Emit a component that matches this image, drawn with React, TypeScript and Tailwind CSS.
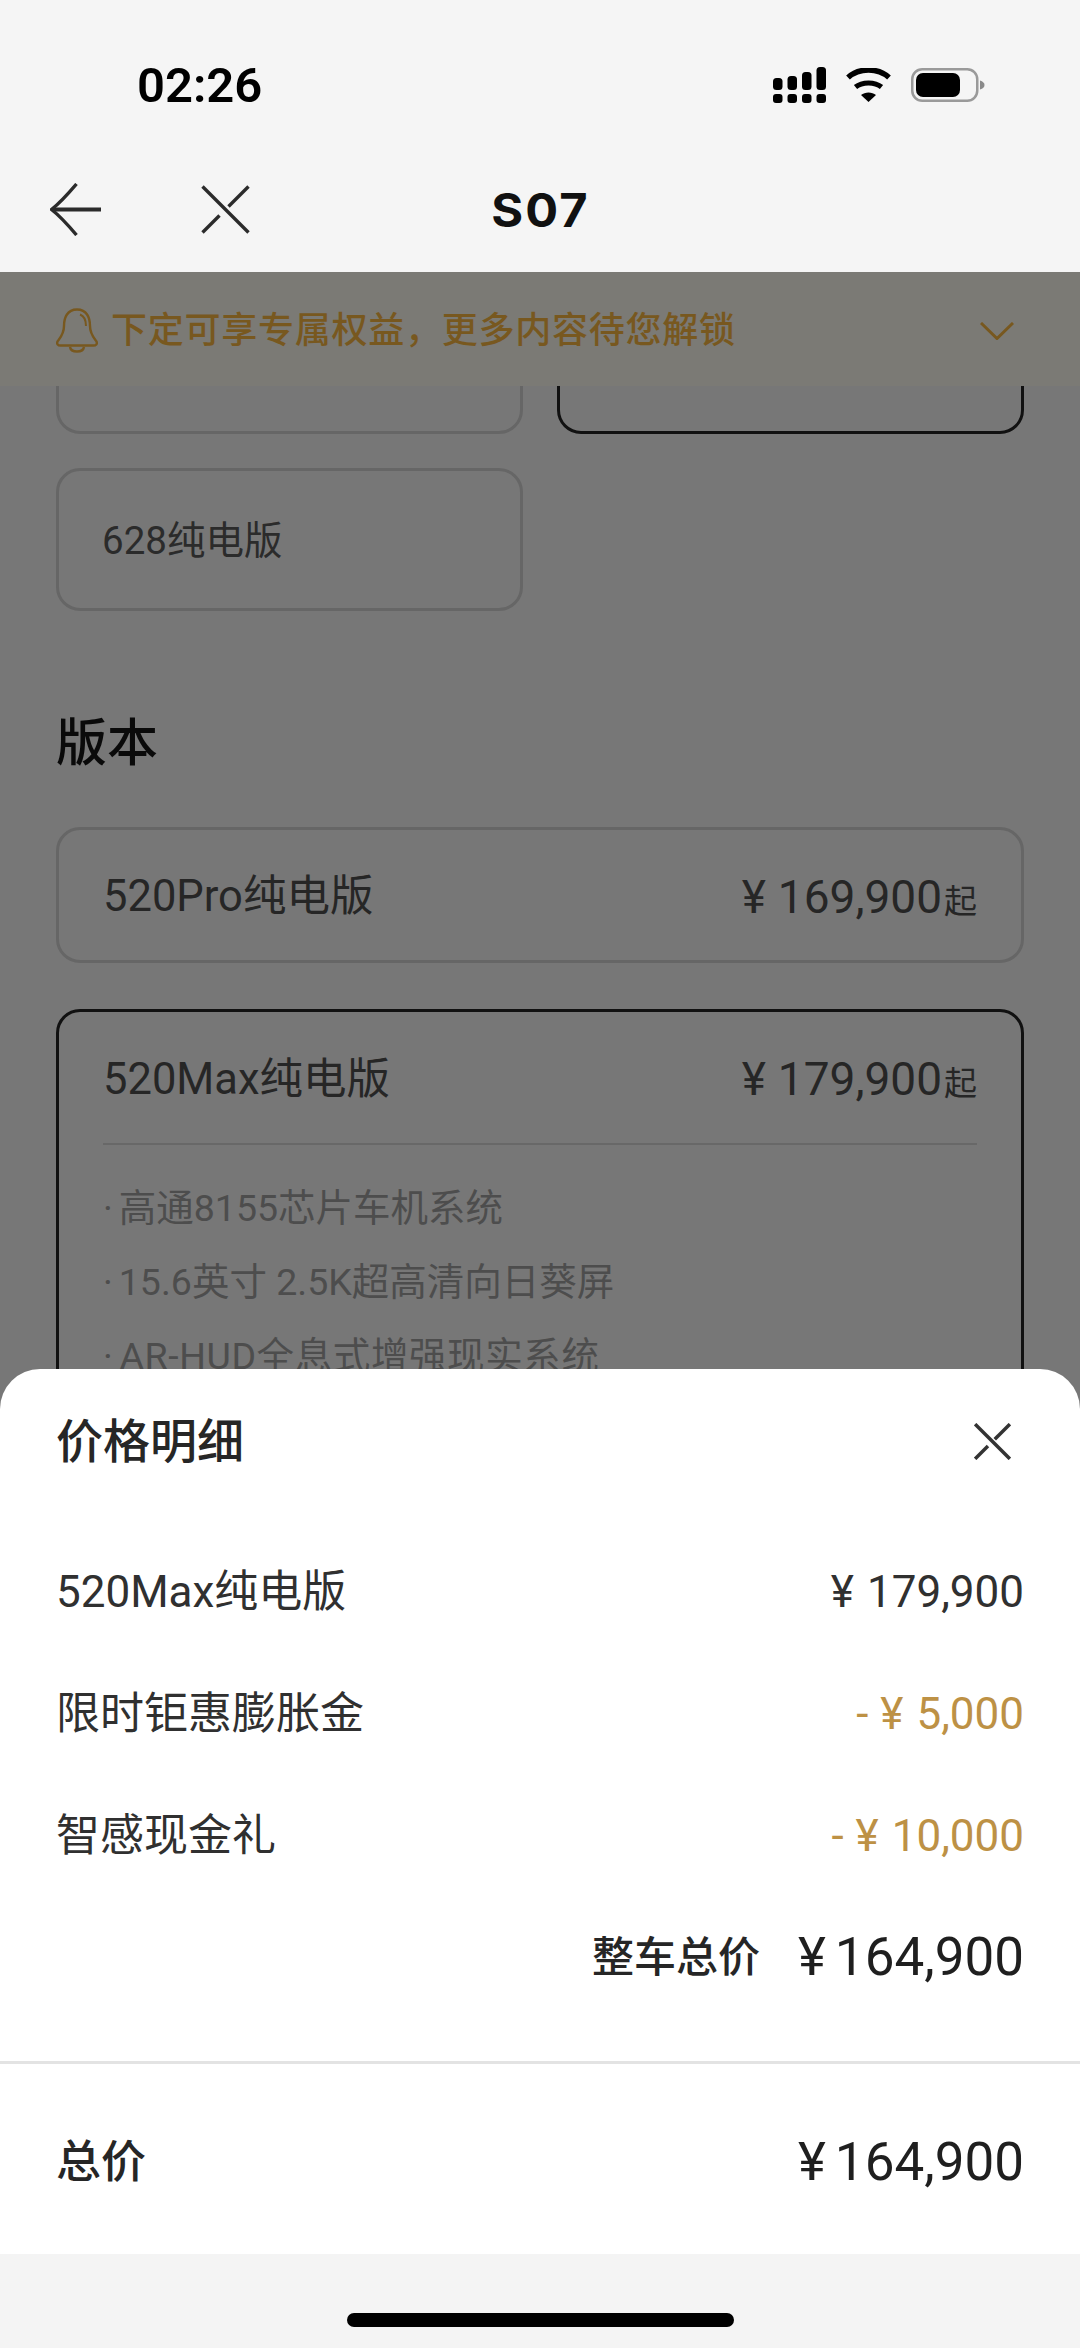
import React from "react";

const FONT = "font-['Roboto','Noto_Sans_CJK_SC',sans-serif]";

const features = [
  { text: "高通8155芯片车机系统", wide: false },
  { text: "15.6英寸 2.5K超高清向日葵屏", wide: false },
  { text: "AR-HUD全息式增强现实系统", wide: true },
];

function SignalIcon() {
  const cols = [
    { x: 0, top: 11 },
    { x: 14.5, top: 9 },
    { x: 29, top: 5 },
    { x: 43.5, top: 0 },
  ];
  return (
    <svg width="53" height="36" viewBox="0 0 53 36" fill="#000">
      {cols.map((c) => (
        <g key={c.x}>
          <rect x={c.x} y={c.top} width="9.5" height={23 - c.top} rx="3.5" />
          <rect x={c.x} y="27" width="9.5" height="9" rx="3" />
        </g>
      ))}
    </svg>
  );
}

function WifiIcon() {
  return (
    <svg width="45" height="34" viewBox="0 0 45 34" fill="none" stroke="#000">
      <path d="M2 9.5C13 -0.5 32 -0.5 43 9.5" strokeWidth="5.5" />
      <path d="M9.5 19C16 13.5 29 13.5 35.5 19" strokeWidth="5" />
      <path d="M15 27C19 23.5 26 23.5 30 27L22.5 34Z" fill="#000" stroke="none" />
    </svg>
  );
}

function BatteryIcon() {
  return (
    <svg width="74" height="34" viewBox="0 0 74 34" fill="none">
      <rect x="1.25" y="1.25" width="65" height="31.5" rx="10" stroke="#9a9a9a" strokeWidth="2.5" />
      <rect x="5" y="5" width="44" height="24" rx="7" fill="#000" />
      <path d="M69 12.5C72 13.5 73.5 15 73.5 17C73.5 19 72 20.5 69 21.5Z" fill="#8a8a8a" />
    </svg>
  );
}

function BackIcon() {
  return (
    <svg width="51" height="53" viewBox="0 0 51 53" fill="none" stroke="#2b2b2b">
      <path d="M2 26.5H51" strokeWidth="3.8" />
      <path d="M26.5 1C18 11 10 20 1.5 26.5C10 33 18 42 26.5 52" strokeWidth="3.4" />
    </svg>
  );
}

function CrossIcon({ size = 49, weight = 3.4, stroke = "#2b2b2b" }: { size?: number; weight?: number; stroke?: string }) {
  return (
    <svg width={size} height={size} viewBox="0 0 49 49" fill="none" stroke={stroke} strokeWidth={weight}>
      <path d="M1.5 1.5L47.5 47.5" />
      <path d="M47.5 1.5L27.5 21.5" />
      <path d="M18.5 30.5L1.5 47.5" />
    </svg>
  );
}

function BellIcon() {
  return (
    <svg width="42" height="46" viewBox="0 0 42 46" fill="none" stroke="#78581f" strokeWidth="2.4">
      <path d="M21 1.5C11 1.5 8 10 8 18C8 26 4 30 1.5 33.5C0.5 36 2 37.5 4.5 37.5H37.5C40 37.5 41.5 36 40.5 33.5C38 30 34 26 34 18C34 10 31 1.5 21 1.5Z" />
      <path d="M24 6.5C28 8 30 12 30 18" strokeWidth="2" />
      <path d="M14 39C15 45 27 45 28 39" />
    </svg>
  );
}

function CardPrice({ value }: { value: string }) {
  return (
    <span className="flex items-baseline text-[46px] text-[#262626]">
      <span className="mr-[12px]">¥</span>
      {value}
      <span className="ml-[2px] text-[33px]">起</span>
    </span>
  );
}

function Amount({ value, minus }: { value: string; minus?: boolean }) {
  return (
    <span className="flex items-baseline">
      {minus && <span className="mr-[12px]">-</span>}
      <span className="mr-[13px]">¥</span>
      {value}
    </span>
  );
}

function TotalAmount() {
  return (
    <span className="flex items-baseline text-[53px] text-[#1f1f1f]">
      <span className="mr-[9px]">¥</span>
      164,900
    </span>
  );
}

function SheetRow({ label, value, gold }: { label: string; value: string; gold?: boolean }) {
  return (
    <div className="flex h-[122px] items-center justify-between px-[56px] pt-[3px] text-[44px] text-[#303030]">
      <span>{label}</span>
      <span className={gold ? "text-[#bd9145]" : ""}>
        <Amount value={value} minus={gold} />
      </span>
    </div>
  );
}

export default function App() {
  return (
    <div className={`${FONT} flex h-[2348px] w-[1080px] flex-col overflow-hidden bg-[#f5f5f5]`}>
      {/* Status bar */}
      <div className="flex h-[170px] items-center justify-between pl-[137px] pr-[95px]">
        <span className="pt-[2px] text-[49px] font-semibold text-black">02:26</span>
        <div className="flex items-center gap-[20px]">
          <SignalIcon />
          <WifiIcon />
          <BatteryIcon />
        </div>
      </div>

      {/* Nav */}
      <div className="grid h-[102px] grid-cols-[1fr_auto_1fr] items-start pl-[50px]">
        <div className="flex items-center gap-[100px] pt-[13px]">
          <BackIcon />
          <CrossIcon />
        </div>
        <span className="-ml-[50px] inline-block scale-x-[1.06] pt-[12px] font-['Inter',sans-serif] text-[46px] font-bold leading-[56px] tracking-[2px] text-[#111]">
          S07
        </span>
        <span />
      </div>

      {/* Dimmed page behind the sheet */}
      <div className="flex h-[1137px] shrink-0 flex-col overflow-hidden bg-[#777777]">
        <div className="flex h-[114px] shrink-0 items-center justify-between bg-[#7b7a75] pl-[56px] pr-[66px] pt-[4px]">
          <div className="flex items-center gap-[13px]">
            <BellIcon />
            <span className="text-[36px] font-medium tracking-[0.75px] text-[#78581f]">下定可享专属权益，更多内容待您解锁</span>
          </div>
          <svg width="34" height="18" viewBox="0 0 34 18" fill="none" stroke="#78581f" strokeWidth="3">
            <path d="M1 1L17 16.5L33 1" />
          </svg>
        </div>

        <div className="min-h-0 flex-1 overflow-hidden px-[56px]">
          <div className="-mt-[95px] grid grid-cols-2 gap-x-[34px] gap-y-[34px]">
            <div className="h-[143px] rounded-[24px] border-[3px] border-[#666666]" />
            <div className="h-[143px] rounded-[24px] border-[3px] border-[#111111]" />
            <div className="flex h-[143px] items-center rounded-[24px] border-[3px] border-[#666666] pl-[43px] pt-[3px] text-[38.5px] text-[#2b2b2b]">
              628纯电版
            </div>
          </div>

          <h2 className="mb-[58px] mt-[108px] h-[50px] text-[51px] font-medium leading-[50px] text-[#0a0a0a]">版本</h2>

          <div className="flex h-[136px] items-center justify-between rounded-[24px] border-[3px] border-[#666666] px-[44px] pt-[4px] text-[43.5px] text-[#262626]">
            <span>520Pro纯电版</span>
            <CardPrice value="169,900" />
          </div>

          <div className="mt-[46px] rounded-[24px] border-[3px] border-[#111111] px-[44px]">
            <div className="flex h-[133px] items-center justify-between border-b-2 border-[#686868] pt-[4px] text-[43.5px] text-[#262626]">
              <span>520Max纯电版</span>
              <CardPrice value="179,900" />
            </div>
            <ul className="mt-[24px] text-[37.5px] text-[#4d4d4d]">
              {features.map((f) => (
                <li key={f.text} className={`flex h-[74px] items-center pt-[4px] ${f.wide ? "tracking-[0.6px]" : ""}`}>
                  <span className="mr-[6px]">·</span>
                  {f.text}
                </li>
              ))}
            </ul>
          </div>
        </div>
      </div>

      {/* Price sheet */}
      <div className="relative -mt-[40px] flex h-[885px] shrink-0 flex-col rounded-t-[40px] bg-white">
        <div className="flex h-[144px] items-center justify-between pl-[56px] pr-[69px]">
          <span className="pt-[2px] text-[47px] font-medium text-[#262626]">价格明细</span>
          <CrossIcon size={37} weight={4.6} stroke="#333333" />
        </div>
        <div className="mt-[16px]">
          <SheetRow label="520Max纯电版" value="179,900" />
          <SheetRow label="限时钜惠膨胀金" value="5,000" gold />
          <SheetRow label="智感现金礼" value="10,000" gold />
          <div className="flex h-[122px] items-center justify-end gap-[38px] px-[56px] pt-[3px] text-[#262626]">
            <span className="text-[42px] font-medium">整车总价</span>
            <TotalAmount />
          </div>
        </div>
        <div className="mt-[44px] h-[3px] bg-[#e3e3e3]" />
        <div className="flex h-[190px] items-center justify-between px-[56px] pt-[8px] text-[#262626]">
          <span className="text-[45px] font-medium">总价</span>
          <TotalAmount />
        </div>
      </div>

      {/* Home indicator */}
      <div className="flex flex-1 justify-center bg-[#f4f4f4] pt-[59px]">
        <div className="h-[14px] w-[387px] rounded-full bg-black" />
      </div>
    </div>
  );
}
